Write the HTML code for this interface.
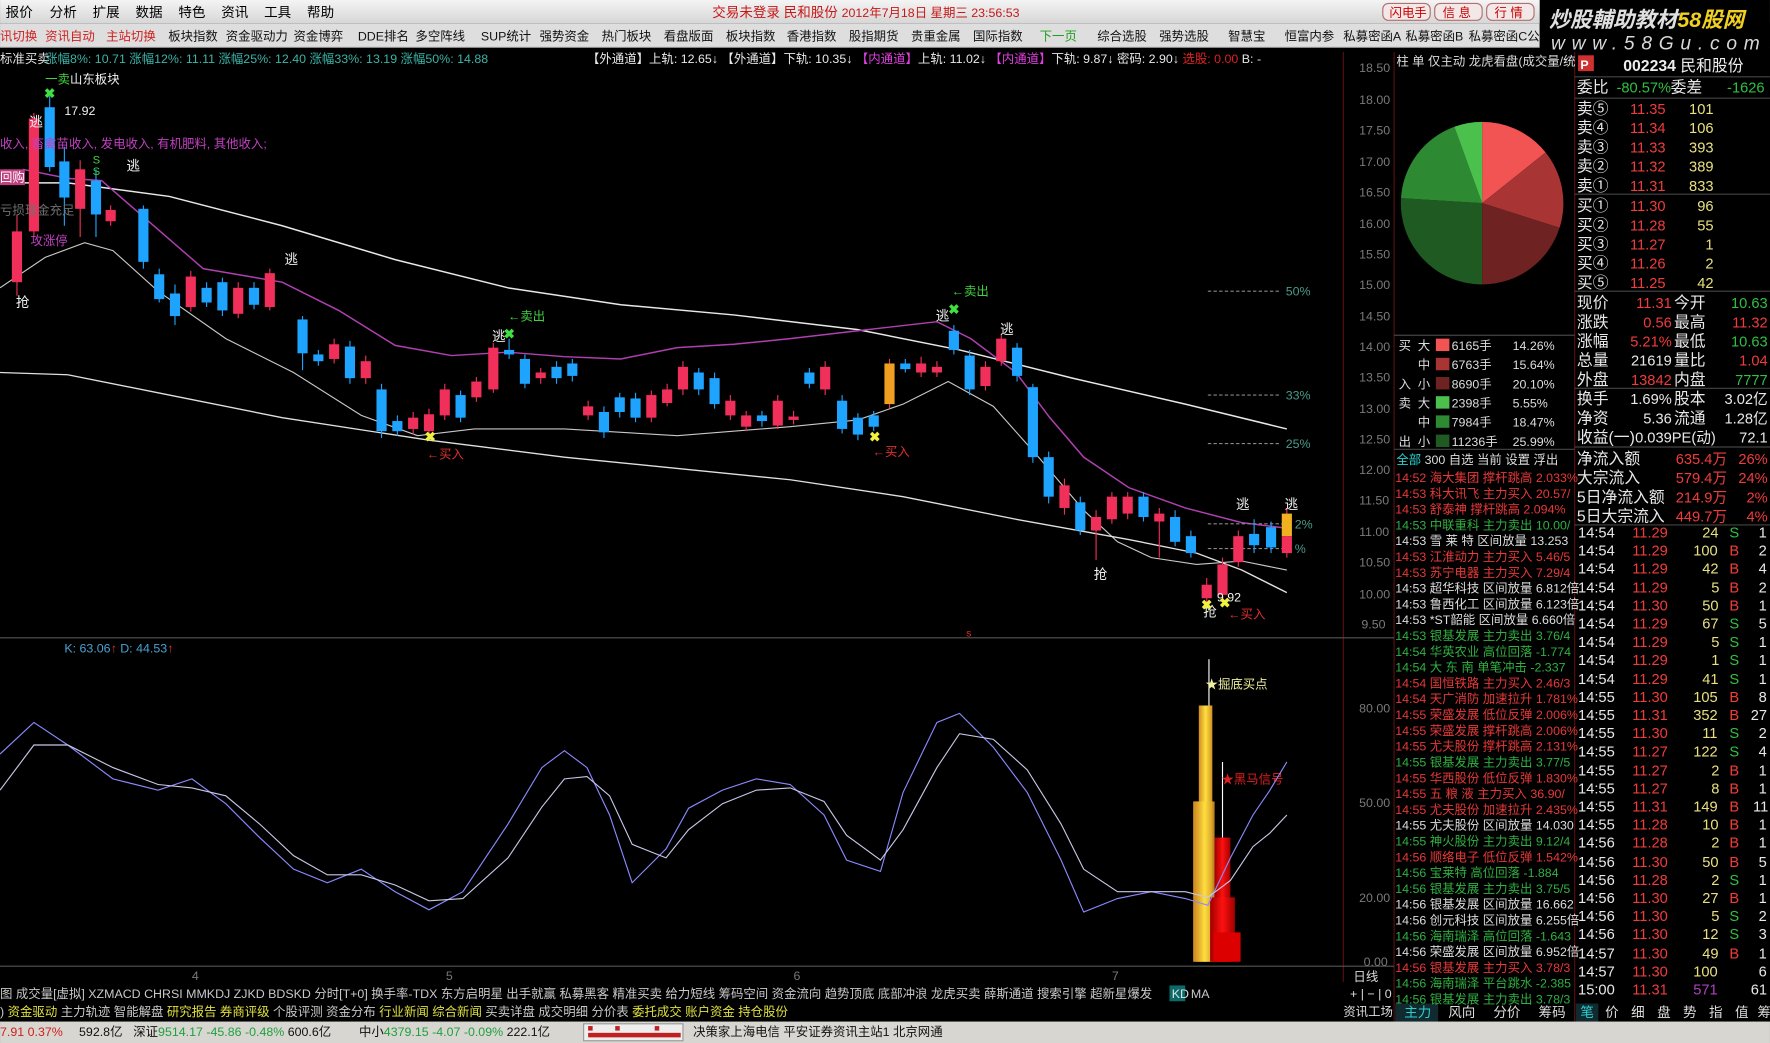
<!DOCTYPE html>
<html><head><meta charset="utf-8">
<style>
html,body{margin:0;padding:0;background:#000;width:1770px;height:1043px;overflow:hidden}
svg{display:block}
text{font-family:"Liberation Sans","Noto Sans CJK SC",sans-serif}
.r{fill:#f0305a}.b{fill:#1ea4ff}
.wr line{stroke:#f0305a}.wb line{stroke:#1ea4ff}
</style></head><body>
<svg width="1770" height="1043" viewBox="0 0 1568 924" xmlns="http://www.w3.org/2000/svg">
<defs>
<linearGradient id="mg" x1="0" y1="0" x2="0" y2="1"><stop offset="0" stop-color="#f4f4f4"/><stop offset="1" stop-color="#d6d6d6"/></linearGradient>
<linearGradient id="yb" x1="0" y1="0" x2="1" y2="0"><stop offset="0" stop-color="#d08a20"/><stop offset=".5" stop-color="#ffe040"/><stop offset="1" stop-color="#d09020"/></linearGradient>
<linearGradient id="rb" x1="0" y1="0" x2="1" y2="0"><stop offset="0" stop-color="#a00000"/><stop offset=".5" stop-color="#ff1010"/><stop offset="1" stop-color="#a00000"/></linearGradient>
</defs>
<rect width="1568" height="924" fill="#000"/>
<rect x="0" y="0" width="1568" height="21" fill="url(#mg)"/>
<g font-size="12" fill="#000">
<text x="5" y="15">报价</text><text x="44" y="15">分析</text><text x="82" y="15">扩展</text><text x="120" y="15">数据</text><text x="158" y="15">特色</text><text x="196" y="15">资讯</text><text x="234" y="15">工具</text><text x="272" y="15">帮助</text>
</g>
<text x="631" y="15" font-size="12" fill="#c81818">交易未登录 民和股份 <tspan font-size="11">2012年7月18日 星期三 23:56:53</tspan></text>
<g font-size="11" fill="#c00">
<rect x="1225" y="3" width="42" height="15" rx="5" fill="#f2e8e8" stroke="#b07070"/><text x="1231" y="15">闪电手</text>
<rect x="1271" y="3" width="42" height="15" rx="5" fill="#f2e8e8" stroke="#b07070"/><text x="1278" y="15">信  息</text>
<rect x="1317" y="3" width="42" height="15" rx="5" fill="#f2e8e8" stroke="#b07070"/><text x="1324" y="15">行  情</text>
</g>
<rect x="0" y="21" width="1364" height="21" fill="#dedede"/>
<line x1="0" y1="42" x2="1568" y2="42" stroke="#888"/>
<g font-size="11" fill="#111">
<text x="0" y="36" fill="#d02020">讯切换</text><text x="40" y="36" fill="#d02020">资讯自动</text><text x="94" y="36" fill="#d02020">主站切换</text>
<text x="149" y="36">板块指数</text><text x="200" y="36">资金驱动力</text><text x="260" y="36">资金博弈</text><text x="317" y="36">DDE排名</text><text x="368" y="36">多空阵线</text><text x="426" y="36">SUP统计</text><text x="478" y="36">强势资金</text><text x="533" y="36">热门板块</text><text x="588" y="36">看盘版面</text><text x="643" y="36">板块指数</text><text x="697" y="36">香港指数</text><text x="752" y="36">股指期货</text><text x="807" y="36">贵重金属</text><text x="862" y="36">国际指数</text><text x="921" y="36" fill="#20a020">下一页</text><text x="972" y="36">综合选股</text><text x="1027" y="36">强势选股</text><text x="1088" y="36">智慧宝</text><text x="1138" y="36">恒富内参</text><text x="1190" y="36">私募密函A</text><text x="1245" y="36">私募密函B</text><text x="1301" y="36">私募密函C</text><text x="1353" y="36">公</text>
</g>
<rect x="1364" y="0" width="204" height="46" fill="#000"/>
<text x="1372" y="24" font-size="19" font-style="italic" fill="#e0e0e0" font-weight="bold">炒股輔助教材<tspan fill="#f0d020">58股网</tspan></text>
<text x="1374" y="44" font-size="17" font-style="italic" fill="#d8d8d8" letter-spacing="6">www.58Gu.com</text>
<g font-size="11">
<text x="0" y="56" fill="#e0e0e0">标准买卖</text>
<text x="40" y="56" fill="#3cb4a8">涨幅8%: 10.71  涨幅12%: 11.11  涨幅25%: 12.40  涨幅33%: 13.19  涨幅50%: 14.88</text>
<text x="520" y="56" fill="#e8e8e8">【外通道】上轨: 12.65↓ 【外通道】下轨: 10.35↓ <tspan fill="#e040e0">【内通道】</tspan>上轨: 11.02↓ <tspan fill="#e040e0">【内通道】</tspan>下轨: 9.87↓  密码: 2.90↓ <tspan fill="#e02020">选股: 0.00</tspan>  B: -</text>
</g>
<g stroke="#5a1010" stroke-width="1">
<line x1="1190" y1="46" x2="1190" y2="870"/><line x1="1235" y1="46" x2="1235" y2="905"/>
<line x1="1395" y1="46" x2="1395" y2="905"/>
<line x1="0" y1="565" x2="1235" y2="565" stroke="#555"/>
<line x1="0" y1="856" x2="1235" y2="856" stroke="#555"/>
<line x1="1235" y1="297" x2="1395" y2="297" stroke="#444"/><line x1="1235" y1="398" x2="1395" y2="398" stroke="#444"/>
<line x1="1395" y1="68" x2="1568" y2="68" stroke="#444"/><line x1="1395" y1="87" x2="1568" y2="87" stroke="#444"/>
<line x1="1395" y1="172" x2="1568" y2="172" stroke="#444"/><line x1="1395" y1="258" x2="1568" y2="258" stroke="#444"/>
<line x1="1395" y1="344" x2="1568" y2="344" stroke="#444"/><line x1="1395" y1="396" x2="1568" y2="396" stroke="#444"/>
<line x1="1395" y1="465" x2="1568" y2="465" stroke="#444"/>
</g>
<g font-size="11" fill="#7a7a7a">
<text x="1204" y="64">18.50</text><text x="1204" y="92">18.00</text><text x="1204" y="119">17.50</text><text x="1204" y="147">17.00</text><text x="1204" y="174">16.50</text><text x="1204" y="202">16.00</text><text x="1204" y="229">15.50</text><text x="1204" y="256">15.00</text><text x="1204" y="284">14.50</text><text x="1204" y="311">14.00</text><text x="1204" y="338">13.50</text><text x="1204" y="366">13.00</text><text x="1204" y="393">12.50</text><text x="1204" y="420">12.00</text><text x="1204" y="447">11.50</text><text x="1204" y="475">11.00</text><text x="1204" y="502">10.50</text><text x="1204" y="530">10.00</text><text x="1206" y="557">9.50</text>
<text x="1204" y="631">80.00</text><text x="1204" y="715">50.00</text><text x="1204" y="799">20.00</text><text x="1208" y="856">0.00</text>
</g>
<polyline fill="none" stroke="#e8e8e8" stroke-width="1.3" points="0,162 60,162 150,174 250,200 350,230 450,255 550,270 650,279 760,292 850,310 950,335 1050,358 1140,380"/>
<polyline fill="none" stroke="#b040b0" stroke-width="1.3" points="20,150 60,158 90,160 120,186 180,238 250,250 300,275 350,306 400,315 450,312 500,316 550,318 600,308 650,305 700,300 760,293 830,285 860,300 900,330 930,370 960,405 1000,432 1050,450 1100,463 1140,468"/>
<polyline fill="none" stroke="#c8c8c8" stroke-width="1" points="0,255 40,228 75,215 100,222 140,258 200,300 260,330 320,368 370,386 420,380 500,380 600,386 700,378 760,372 800,358 840,338 880,360 920,405 960,452 990,480 1020,494 1060,500 1100,497 1140,505"/>
<polyline fill="none" stroke="#e0e0e0" stroke-width="1.2" points="0,330 60,332 150,350 250,370 380,390 500,405 600,415 700,425 800,440 900,460 1000,478 1060,490 1100,505 1140,525"/>
<g stroke="#888" stroke-dasharray="3,2"><line x1="1070" y1="258" x2="1135" y2="258"/><line x1="1070" y1="350" x2="1135" y2="350"/><line x1="1070" y1="393" x2="1135" y2="393"/><line x1="1070" y1="464" x2="1145" y2="464"/><line x1="1070" y1="486" x2="1145" y2="486"/></g>
<g font-size="11" fill="#4a9a8a"><text x="1139" y="262">50%</text><text x="1139" y="354">33%</text><text x="1139" y="397">25%</text><text x="1147" y="468">2%</text><text x="1147" y="490">%</text></g>
<g stroke-width="1">
<g class="wr"><line x1="15" y1="190" x2="15" y2="262"/><line x1="30" y1="100" x2="30" y2="210"/><line x1="71" y1="142" x2="71" y2="210"/><line x1="98" y1="182" x2="98" y2="200"/><line x1="169" y1="240" x2="169" y2="276"/><line x1="211" y1="250" x2="211" y2="282"/><line x1="239" y1="238" x2="239" y2="275"/><line x1="296" y1="300" x2="296" y2="322"/><line x1="324" y1="315" x2="324" y2="340"/><line x1="366" y1="365" x2="366" y2="385"/><line x1="380" y1="362" x2="380" y2="386"/><line x1="394" y1="340" x2="394" y2="372"/><line x1="422" y1="334" x2="422" y2="356"/><line x1="437" y1="304" x2="437" y2="348"/><line x1="479" y1="326" x2="479" y2="340"/><line x1="521" y1="355" x2="521" y2="372"/><line x1="577" y1="346" x2="577" y2="374"/><line x1="591" y1="340" x2="591" y2="360"/><line x1="605" y1="320" x2="605" y2="350"/><line x1="647" y1="350" x2="647" y2="372"/><line x1="661" y1="364" x2="661" y2="382"/><line x1="689" y1="350" x2="689" y2="380"/><line x1="703" y1="364" x2="703" y2="376"/><line x1="731" y1="320" x2="731" y2="350"/><line x1="788" y1="318" x2="788" y2="362"/><line x1="816" y1="316" x2="816" y2="334"/><line x1="830" y1="320" x2="830" y2="334"/><line x1="873" y1="320" x2="873" y2="346"/><line x1="887" y1="296" x2="887" y2="324"/><line x1="943" y1="424" x2="943" y2="456"/><line x1="971" y1="452" x2="971" y2="496"/><line x1="985" y1="436" x2="985" y2="464"/><line x1="999" y1="436" x2="999" y2="460"/><line x1="1027" y1="450" x2="1027" y2="494"/><line x1="1069" y1="512" x2="1069" y2="534"/><line x1="1083" y1="494" x2="1083" y2="532"/><line x1="1097" y1="470" x2="1097" y2="502"/><line x1="1140" y1="450" x2="1140" y2="494"/></g>
<g class="wb"><line x1="44" y1="85" x2="44" y2="152"/><line x1="57" y1="130" x2="57" y2="200"/><line x1="85" y1="150" x2="85" y2="210"/><line x1="127" y1="182" x2="127" y2="238"/><line x1="141" y1="238" x2="141" y2="268"/><line x1="155" y1="252" x2="155" y2="288"/><line x1="183" y1="250" x2="183" y2="272"/><line x1="197" y1="246" x2="197" y2="280"/><line x1="225" y1="250" x2="225" y2="274"/><line x1="268" y1="280" x2="268" y2="328"/><line x1="282" y1="310" x2="282" y2="324"/><line x1="310" y1="302" x2="310" y2="340"/><line x1="338" y1="340" x2="338" y2="388"/><line x1="352" y1="368" x2="352" y2="386"/><line x1="408" y1="346" x2="408" y2="374"/><line x1="451" y1="300" x2="451" y2="318"/><line x1="465" y1="314" x2="465" y2="344"/><line x1="493" y1="320" x2="493" y2="340"/><line x1="507" y1="318" x2="507" y2="338"/><line x1="535" y1="360" x2="535" y2="388"/><line x1="549" y1="348" x2="549" y2="370"/><line x1="563" y1="348" x2="563" y2="374"/><line x1="619" y1="326" x2="619" y2="350"/><line x1="633" y1="330" x2="633" y2="362"/><line x1="675" y1="364" x2="675" y2="378"/><line x1="717" y1="326" x2="717" y2="344"/><line x1="746" y1="350" x2="746" y2="384"/><line x1="760" y1="366" x2="760" y2="390"/><line x1="774" y1="364" x2="774" y2="382"/><line x1="802" y1="318" x2="802" y2="330"/><line x1="845" y1="288" x2="845" y2="314"/><line x1="859" y1="310" x2="859" y2="350"/><line x1="901" y1="304" x2="901" y2="338"/><line x1="915" y1="340" x2="915" y2="410"/><line x1="929" y1="400" x2="929" y2="446"/><line x1="957" y1="440" x2="957" y2="474"/><line x1="1013" y1="436" x2="1013" y2="462"/><line x1="1041" y1="452" x2="1041" y2="484"/><line x1="1055" y1="470" x2="1055" y2="494"/><line x1="1111" y1="460" x2="1111" y2="490"/><line x1="1126" y1="462" x2="1126" y2="490"/></g>
</g>
<g>
<rect class="r" x="10.5" y="205" width="9" height="45"/><rect class="r" x="25.5" y="105" width="9" height="100"/><rect class="b" x="39.5" y="95" width="9" height="53"/><rect class="b" x="52.5" y="143" width="9" height="32"/><rect class="r" x="66.5" y="150" width="9" height="35"/><rect class="b" x="80.5" y="160" width="9" height="30"/><rect class="r" x="93.5" y="186" width="9" height="10"/>
<rect class="b" x="122.5" y="185" width="9" height="47"/><rect class="b" x="136.5" y="243" width="9" height="22"/><rect class="b" x="150.5" y="260" width="9" height="20"/><rect class="r" x="164.5" y="245" width="9" height="27"/><rect class="b" x="178.5" y="255" width="9" height="13"/><rect class="b" x="192.5" y="250" width="9" height="25"/><rect class="r" x="206.5" y="255" width="9" height="23"/><rect class="b" x="220.5" y="255" width="9" height="15"/><rect class="r" x="234.5" y="242" width="9" height="30"/>
<rect class="b" x="263.5" y="283" width="9" height="30"/><rect class="b" x="277.5" y="314" width="9" height="6"/><rect class="r" x="291.5" y="305" width="9" height="13"/><rect class="b" x="305.5" y="307" width="9" height="28"/><rect class="r" x="319.5" y="320" width="9" height="15"/><rect class="b" x="333.5" y="345" width="9" height="37"/><rect class="b" x="347.5" y="373" width="9" height="9"/><rect class="r" x="361.5" y="370" width="9" height="10"/><rect class="r" x="375.5" y="367" width="9" height="15"/><rect class="r" x="389.5" y="345" width="9" height="23"/><rect class="b" x="403.5" y="350" width="9" height="20"/><rect class="r" x="417.5" y="338" width="9" height="14"/><rect class="r" x="432.5" y="308" width="9" height="37"/><rect class="b" x="446.5" y="310" width="9" height="4"/><rect class="b" x="460.5" y="318" width="9" height="22"/><rect class="r" x="474.5" y="330" width="9" height="5"/><rect class="b" x="488.5" y="325" width="9" height="10"/><rect class="b" x="502.5" y="322" width="9" height="11"/><rect class="r" x="516.5" y="360" width="9" height="8"/><rect class="b" x="530.5" y="365" width="9" height="18"/><rect class="b" x="544.5" y="352" width="9" height="13"/><rect class="b" x="558.5" y="353" width="9" height="17"/><rect class="r" x="572.5" y="350" width="9" height="20"/><rect class="r" x="586.5" y="345" width="9" height="12"/><rect class="r" x="600.5" y="325" width="9" height="20"/><rect class="b" x="614.5" y="330" width="9" height="15"/><rect class="b" x="628.5" y="335" width="9" height="23"/><rect class="r" x="642.5" y="355" width="9" height="13"/><rect class="r" x="656.5" y="368" width="9" height="10"/><rect class="b" x="670.5" y="368" width="9" height="5"/><rect class="r" x="684.5" y="355" width="9" height="22"/><rect class="r" x="698.5" y="369" width="9" height="3"/><rect class="b" x="712.5" y="330" width="9" height="10"/><rect class="r" x="726.5" y="325" width="9" height="20"/><rect class="b" x="741.5" y="355" width="9" height="25"/><rect class="b" x="755.5" y="370" width="9" height="15"/><rect class="b" x="769.5" y="368" width="9" height="10"/><rect x="783.5" y="322" width="9" height="36" fill="#f0a020"/><rect class="b" x="797.5" y="322" width="9" height="5"/><rect class="r" x="811.5" y="322" width="9" height="8"/><rect class="r" x="825.5" y="325" width="9" height="5"/><rect class="b" x="840.5" y="293" width="9" height="17"/><rect class="b" x="854.5" y="315" width="9" height="30"/><rect class="r" x="868.5" y="325" width="9" height="17"/><rect class="r" x="882.5" y="300" width="9" height="20"/><rect class="b" x="896.5" y="308" width="9" height="25"/><rect class="b" x="910.5" y="343" width="9" height="62"/><rect class="b" x="924.5" y="405" width="9" height="35"/><rect class="r" x="938.5" y="430" width="9" height="20"/><rect class="b" x="952.5" y="445" width="9" height="25"/><rect class="r" x="966.5" y="458" width="9" height="12"/><rect class="r" x="980.5" y="440" width="9" height="20"/><rect class="r" x="994.5" y="440" width="9" height="15"/><rect class="b" x="1008.5" y="440" width="9" height="18"/><rect class="r" x="1022.5" y="455" width="9" height="7"/><rect class="b" x="1036.5" y="458" width="9" height="22"/><rect class="b" x="1050.5" y="475" width="9" height="15"/><rect class="r" x="1064.5" y="518" width="9" height="12"/><rect class="r" x="1078.5" y="500" width="9" height="27"/><rect class="r" x="1092.5" y="475" width="9" height="23"/><rect class="b" x="1106.5" y="473" width="9" height="10"/><rect class="b" x="1121.5" y="467" width="9" height="18"/><rect x="1135.5" y="455" width="9" height="20" fill="#f0b020"/><rect class="r" x="1135.5" y="475" width="9" height="15"/>
</g>
<g font-size="12" fill="#f0f0f0">
<text x="26" y="112">逃</text><text x="112" y="151">逃</text><text x="252" y="234">逃</text><text x="436" y="302">逃</text><text x="829" y="284">逃</text><text x="886" y="296">逃</text><text x="1095" y="451">逃</text><text x="1138" y="451">逃</text>
<text x="14" y="272">抢</text><text x="969" y="513">抢</text><text x="1066" y="546">抢</text>
<text x="57" y="102" font-size="11">17.92</text><text x="1078" y="533" font-size="11">9.92</text>
</g>
<text x="40" y="74" font-size="11" fill="#40d040">一卖<tspan fill="#f0f0f0">山东板块</tspan></text>
<text x="0" y="131" font-size="11" fill="#c040c0">收入, 畜禽苗收入, 发电收入, 有机肥料, 其他收入;</text>
<rect x="0" y="150" width="22" height="14" fill="#c04080"/><text x="0" y="161" font-size="11" fill="#fff">回购</text>
<text x="0" y="190" font-size="11" fill="#707070">亏损现金充足</text>
<text x="27" y="217" font-size="11" fill="#c040c0">攻涨停</text>
<g font-size="11"><text x="450" y="284" fill="#40d040">←卖出</text><text x="843" y="262" fill="#40d040">←卖出</text><text x="378" y="406" fill="#e03030">←买入</text><text x="773" y="404" fill="#e03030">←买入</text><text x="1088" y="548" fill="#e03030">←买入</text></g>
<g font-size="12" font-weight="bold"><text x="39" y="87" fill="#40e040">✖</text><text x="446" y="300" fill="#40e040">✖</text><text x="840" y="278" fill="#40e040">✖</text><text x="376" y="391" fill="#f0f040">✖</text><text x="770" y="391" fill="#f0f040">✖</text><text x="1064" y="540" fill="#f0f040">✖</text><text x="1080" y="538" fill="#f0f040">✖</text></g>
<text x="82" y="145" font-size="10" fill="#40d040">S</text><text x="82" y="155" font-size="10" fill="#40d040">S</text>
<text x="856" y="564" font-size="9" fill="#e03030">s</text>
<text x="57" y="578" font-size="11" fill="#4aa0d0">K: 63.06<tspan fill="#e03030">↑</tspan>   D: 44.53<tspan fill="#e03030">↑</tspan></text>
<rect x="1057" y="710" width="8" height="142" fill="#d0902a"/><rect x="1062" y="625" width="12" height="227" fill="url(#yb)"/><rect x="1058" y="710" width="18" height="142" fill="url(#yb)" opacity=".9"/>
<rect x="1076" y="742" width="14" height="110" fill="url(#rb)"/><rect x="1072" y="795" width="22" height="57" fill="url(#rb)"/><rect x="1075" y="826" width="24" height="26" fill="#d00"/>
<line x1="1071" y1="584" x2="1071" y2="625" stroke="#fff"/><line x1="1083" y1="675" x2="1083" y2="742" stroke="#fff"/>
<text x="1068" y="610" font-size="11" fill="#f0f0a0">★掘底买点</text><text x="1082" y="694" font-size="11" fill="#e02020">★黑马信号</text>
<polyline fill="none" stroke="#8a8aff" stroke-width="1" points="0,668 30,640 60,660 100,690 140,700 170,690 200,712 230,742 260,770 290,782 320,770 350,790 380,806 410,790 450,730 480,680 500,665 520,680 540,722 560,782 590,752 610,716 640,700 670,690 700,695 730,722 750,762 780,772 800,702 830,640 850,632 880,662 910,702 940,762 960,808 990,796 1020,790 1050,796 1070,802 1090,760 1110,722 1125,700 1140,675"/>
<polyline fill="none" stroke="#c8c8e8" stroke-width="1" points="0,700 30,660 60,660 100,680 140,695 170,698 200,705 230,730 260,758 290,775 320,775 350,784 380,798 410,796 450,760 480,715 500,690 520,688 540,705 560,748 590,760 610,735 640,712 670,700 700,698 730,710 750,740 780,762 800,735 830,680 850,650 880,655 910,682 940,730 960,770 990,790 1020,790 1050,790 1070,795 1090,780 1110,750 1125,738 1140,722"/>
<g font-size="11" fill="#777"><text x="170" y="868">4</text><text x="395" y="868">5</text><text x="703" y="868">6</text><text x="985" y="868">7</text></g>
<g font-size="11" fill="#c8c8c8">
<text x="0" y="884">图 成交量[虚拟] XZMACD CHRSI MMKDJ ZJKD BDSKD 分时[T+0] 换手率-TDX 东方启明星 出手就赢 私募黑客 精准买卖 给力短线 筹码空间 资金流向 趋势顶底 底部冲浪 龙虎买卖 薛斯通道 搜索引擎 超新星爆发</text>
<rect x="1036" y="873" width="14" height="14" fill="#0a6a6a"/><text x="1038" y="884" fill="#e0e0e0">KD</text><text x="1055" y="884">MA</text>
<text x="0" y="900">) <tspan fill="#e0e040">资金驱动</tspan> 主力轨迹 智能解盘 <tspan fill="#e0e040">研究报告 券商评级</tspan> 个股评测 资金分布 <tspan fill="#e0e040">行业新闻 综合新闻</tspan> 买卖详盘 成交明细 分价表 <tspan fill="#e0e040">委托成交 账户资金 持仓股份</tspan></text>
<text x="1199" y="869" fill="#ddd">日线</text><text x="1196" y="884" fill="#ddd">+ | − | 0</text><text x="1190" y="900" fill="#ddd">资讯工场</text>
</g>
<g font-size="12" fill="#ddd"><rect x="1236" y="889" width="38" height="16" fill="#102a30"/><text x="1244" y="901" fill="#2ad0d0">主力</text><text x="1283" y="901">风向</text><text x="1323" y="901">分价</text><text x="1363" y="901">筹码</text>
<rect x="1396" y="889" width="20" height="16" fill="#102a30"/><text x="1400" y="901" fill="#2ad0d0">笔</text><text x="1422" y="901">价</text><text x="1445" y="901">细</text><text x="1468" y="901">盘</text><text x="1491" y="901">势</text><text x="1514" y="901">指</text><text x="1537" y="901">值</text><text x="1557" y="901">筹</text></g>
<rect x="0" y="905" width="1568" height="19" fill="#d8d6d0"/>
<g font-size="11"><text x="0" y="918" fill="#d02020">7.91  0.37%</text><text x="70" y="918" fill="#111">592.8亿</text><text x="118" y="918" fill="#111">深证<tspan fill="#20a040">9514.17  -45.86  -0.48%</tspan> 600.6亿</text><text x="318" y="918" fill="#111">中小<tspan fill="#20a040">4379.15  -4.07  -0.09%</tspan>  222.1亿</text>
<rect x="517" y="907" width="88" height="15" fill="#eee" stroke="#999"/>
<g fill="#c02020"><rect x="521" y="915" width="82" height="4"/><rect x="521" y="909" width="4" height="4"/><rect x="545" y="909" width="4" height="4"/><rect x="580" y="909" width="4" height="4"/></g>
<text x="614" y="918" fill="#111">决策家上海电信  平安证券资讯主站1  北京网通</text></g>
<text x="1237" y="58" font-size="11" fill="#ddd">柱  单  仅主动  龙虎看盘(成交量/统</text>
<path d="M1313,180 L1313,108 A72,72 0 0 1 1369.2,135 Z" fill="#f25454"/>
<path d="M1313,180 L1369.2,135 A72,72 0 0 1 1381.6,201.8 Z" fill="#a83434"/>
<path d="M1313,180 L1381.6,201.8 A72,72 0 0 1 1313,252 Z" fill="#6e2222"/>
<path d="M1313,180 L1313,252 A72,72 0 0 1 1241.1,175.5 Z" fill="#1f5a22"/>
<path d="M1313,180 L1241.1,175.5 A72,72 0 0 1 1288.4,112.3 Z" fill="#2e8a32"/>
<path d="M1313,180 L1288.4,112.3 A72,72 0 0 1 1313,108 Z" fill="#4cc04c"/>
<g font-size="11" fill="#ddd">
<text x="1239" y="310">买</text><text x="1256" y="310">大</text><rect x="1272" y="300" width="12" height="11" fill="#f25454"/><text x="1286" y="310">6165手</text><text x="1340" y="310">14.26%</text>
<text x="1256" y="327">中</text><rect x="1272" y="317" width="12" height="11" fill="#a83434"/><text x="1286" y="327">6763手</text><text x="1340" y="327">15.64%</text>
<text x="1239" y="344">入</text><text x="1256" y="344">小</text><rect x="1272" y="334" width="12" height="11" fill="#6e2222"/><text x="1286" y="344">8690手</text><text x="1340" y="344">20.10%</text>
<text x="1239" y="361">卖</text><text x="1256" y="361">大</text><rect x="1272" y="351" width="12" height="11" fill="#4cc04c"/><text x="1286" y="361">2398手</text><text x="1340" y="361">5.55%</text>
<text x="1256" y="378">中</text><rect x="1272" y="368" width="12" height="11" fill="#2e8a32"/><text x="1286" y="378">7984手</text><text x="1340" y="378">18.47%</text>
<text x="1239" y="395">出</text><text x="1256" y="395">小</text><rect x="1272" y="385" width="12" height="11" fill="#1f5a22"/><text x="1286" y="395">11236手</text><text x="1340" y="395">25.99%</text>
<text x="1237" y="411"><tspan fill="#2ad0d0">全部</tspan> 300 自选 当前 设置 浮出</text>
</g>
<g font-size="11">
<g fill="#e83838"><text x="1236" y="427">14:52 海大集团  撑杆跳高 2.033%</text><text x="1236" y="441">14:53 科大讯飞  主力买入 20.57/</text><text x="1236" y="455">14:53 舒泰神    撑杆跳高 2.094%</text></g>
<text x="1236" y="469" fill="#30b040">14:53 中联重科  主力卖出 10.00/</text>
<text x="1236" y="483" fill="#ddd">14:53 雪 莱 特  区间放量 13.253</text>
<g fill="#e83838"><text x="1236" y="497">14:53 江淮动力  主力买入 5.46/5</text><text x="1236" y="511">14:53 苏宁电器  主力买入 7.29/4</text></g>
<g fill="#ddd"><text x="1236" y="525">14:53 超华科技  区间放量 6.812倍</text><text x="1236" y="539">14:53 鲁西化工  区间放量 6.123倍</text><text x="1236" y="553">14:53 *ST韶能   区间放量 6.660倍</text></g>
<g fill="#30b040"><text x="1236" y="567">14:53 银基发展  主力卖出 3.76/4</text><text x="1236" y="581">14:54 华英农业  高位回落 -1.774</text><text x="1236" y="595">14:54 大 东 南  单笔冲击 -2.337</text></g>
<g fill="#e83838"><text x="1236" y="609">14:54 国恒铁路  主力买入 2.46/3</text><text x="1236" y="623">14:54 天广消防  加速拉升 1.781%</text><text x="1236" y="637">14:55 荣盛发展  低位反弹 2.006%</text><text x="1236" y="651">14:55 荣盛发展  撑杆跳高 2.006%</text><text x="1236" y="665">14:55 尤夫股份  撑杆跳高 2.131%</text></g>
<text x="1236" y="679" fill="#30b040">14:55 银基发展  主力卖出 3.77/5</text>
<g fill="#e83838"><text x="1236" y="693">14:55 华西股份  低位反弹 1.830%</text><text x="1236" y="707">14:55 五 粮 液  主力买入 36.90/</text><text x="1236" y="721">14:55 尤夫股份  加速拉升 2.435%</text></g>
<text x="1236" y="735" fill="#ddd">14:55 尤夫股份  区间放量 14.030</text>
<text x="1236" y="749" fill="#30b040">14:55 神火股份  主力卖出 9.12/4</text>
<text x="1236" y="763" fill="#e83838">14:56 顺络电子  低位反弹 1.542%</text>
<g fill="#30b040"><text x="1236" y="777">14:56 宝莱特    高位回落 -1.884</text><text x="1236" y="791">14:56 银基发展  主力卖出 3.75/5</text></g>
<g fill="#ddd"><text x="1236" y="805">14:56 银基发展  区间放量 16.662</text><text x="1236" y="819">14:56 创元科技  区间放量 6.255倍</text></g>
<text x="1236" y="833" fill="#30b040">14:56 海南瑞泽  高位回落 -1.643</text>
<text x="1236" y="847" fill="#ddd">14:56 荣盛发展  区间放量 6.952倍</text>
<text x="1236" y="861" fill="#e83838">14:56 银基发展  主力买入 3.78/3</text>
<g fill="#30b040"><text x="1236" y="875">14:56 海南瑞泽  平台跳水 -2.385</text><text x="1236" y="889">14:56 银基发展  主力卖出 3.78/3</text></g>
</g>
<rect x="1398" y="49" width="14" height="14" fill="#d03030"/><text x="1400" y="61" font-size="11" fill="#fff" font-weight="bold">P</text>
<text x="1438" y="63" font-size="14" fill="#eee" font-weight="bold">002234 <tspan font-weight="normal">民和股份</tspan></text>
<g font-size="14" fill="#e8e8e8">
<text x="1397" y="82">委比</text><text x="1432" y="82" fill="#30c040" font-size="13">-80.57%</text><text x="1480" y="82">委差</text><text x="1530" y="82" fill="#30c040" font-size="13">-1626</text>
<text x="1397" y="101">卖⑤</text><text x="1397" y="118">卖④</text><text x="1397" y="135">卖③</text><text x="1397" y="152">卖②</text><text x="1397" y="169">卖①</text>
<text x="1397" y="187">买①</text><text x="1397" y="204">买②</text><text x="1397" y="221">买③</text><text x="1397" y="238">买④</text><text x="1397" y="255">买⑤</text>
<g font-size="13" fill="#f03c3c"><text x="1444" y="101">11.35</text><text x="1444" y="118">11.34</text><text x="1444" y="135">11.33</text><text x="1444" y="152">11.32</text><text x="1444" y="169">11.31</text><text x="1444" y="187">11.30</text><text x="1444" y="204">11.28</text><text x="1444" y="221">11.27</text><text x="1444" y="238">11.26</text><text x="1444" y="255">11.25</text></g>
<g font-size="13" fill="#e8e080" text-anchor="end"><text x="1518" y="101">101</text><text x="1518" y="118">106</text><text x="1518" y="135">393</text><text x="1518" y="152">389</text><text x="1518" y="169">833</text><text x="1518" y="187">96</text><text x="1518" y="204">55</text><text x="1518" y="221">1</text><text x="1518" y="238">2</text><text x="1518" y="255">42</text></g>
<text x="1397" y="273">现价</text><text x="1397" y="290">涨跌</text><text x="1397" y="307">涨幅</text><text x="1397" y="324">总量</text><text x="1397" y="341">外盘</text>
<text x="1483" y="273">今开</text><text x="1483" y="290">最高</text><text x="1483" y="307">最低</text><text x="1483" y="324">量比</text><text x="1483" y="341">内盘</text>
<g font-size="13" text-anchor="end"><text x="1481" y="273" fill="#f03c3c">11.31</text><text x="1481" y="290" fill="#f03c3c">0.56</text><text x="1481" y="307" fill="#f03c3c">5.21%</text><text x="1481" y="324" fill="#e8e8e8">21619</text><text x="1481" y="341" fill="#f03c3c">13842</text>
<text x="1566" y="273" fill="#30c040">10.63</text><text x="1566" y="290" fill="#f03c3c">11.32</text><text x="1566" y="307" fill="#30c040">10.63</text><text x="1566" y="324" fill="#f03c3c">1.04</text><text x="1566" y="341" fill="#30c040">7777</text>
<text x="1481" y="358" fill="#e8e8e8">1.69%</text><text x="1481" y="375" fill="#e8e8e8">5.36</text><text x="1481" y="392" fill="#e8e8e8">0.039</text><text x="1566" y="358" fill="#e8e8e8">3.02亿</text><text x="1566" y="375" fill="#e8e8e8">1.28亿</text><text x="1566" y="392" fill="#e8e8e8">72.1</text></g>
<text x="1397" y="358">换手</text><text x="1397" y="375">净资</text><text x="1397" y="392">收益(一)</text><text x="1483" y="358">股本</text><text x="1483" y="375">流通</text><text x="1481" y="392" font-size="13">PE(动)</text>
<text x="1397" y="411">净流入额</text><text x="1397" y="428">大宗流入</text><text x="1397" y="445">5日净流入额</text><text x="1397" y="462">5日大宗流入</text>
<g font-size="13" fill="#f03c3c" text-anchor="end"><text x="1530" y="411">635.4万</text><text x="1530" y="428">579.4万</text><text x="1530" y="445">214.9万</text><text x="1530" y="462">449.7万</text><text x="1566" y="411">26%</text><text x="1566" y="428">24%</text><text x="1566" y="445">2%</text><text x="1566" y="462">4%</text></g>
</g>
<g font-size="13" fill="#e8e8e8">
<text y="476"><tspan x="1398">14:54</tspan><tspan x="1446" fill="#f03c3c">11.29</tspan><tspan x="1508" fill="#e8e080">24</tspan><tspan x="1532" fill="#30c040">S</tspan><tspan x="1558">1</tspan></text>
<text y="492"><tspan x="1398">14:54</tspan><tspan x="1446" fill="#f03c3c">11.29</tspan><tspan x="1500" fill="#e8e080">100</tspan><tspan x="1532" fill="#f03c3c">B</tspan><tspan x="1558">2</tspan></text>
<text y="508"><tspan x="1398">14:54</tspan><tspan x="1446" fill="#f03c3c">11.29</tspan><tspan x="1508" fill="#e8e080">42</tspan><tspan x="1532" fill="#f03c3c">B</tspan><tspan x="1558">4</tspan></text>
<text y="525"><tspan x="1398">14:54</tspan><tspan x="1446" fill="#f03c3c">11.29</tspan><tspan x="1516" fill="#e8e080">5</tspan><tspan x="1532" fill="#f03c3c">B</tspan><tspan x="1558">2</tspan></text>
<text y="541"><tspan x="1398">14:54</tspan><tspan x="1446" fill="#f03c3c">11.30</tspan><tspan x="1508" fill="#e8e080">50</tspan><tspan x="1532" fill="#f03c3c">B</tspan><tspan x="1558">1</tspan></text>
<text y="557"><tspan x="1398">14:54</tspan><tspan x="1446" fill="#f03c3c">11.29</tspan><tspan x="1508" fill="#e8e080">67</tspan><tspan x="1532" fill="#30c040">S</tspan><tspan x="1558">5</tspan></text>
<text y="573"><tspan x="1398">14:54</tspan><tspan x="1446" fill="#f03c3c">11.29</tspan><tspan x="1516" fill="#e8e080">5</tspan><tspan x="1532" fill="#30c040">S</tspan><tspan x="1558">1</tspan></text>
<text y="589"><tspan x="1398">14:54</tspan><tspan x="1446" fill="#f03c3c">11.29</tspan><tspan x="1516" fill="#e8e080">1</tspan><tspan x="1532" fill="#30c040">S</tspan><tspan x="1558">1</tspan></text>
<text y="606"><tspan x="1398">14:54</tspan><tspan x="1446" fill="#f03c3c">11.29</tspan><tspan x="1508" fill="#e8e080">41</tspan><tspan x="1532" fill="#30c040">S</tspan><tspan x="1558">1</tspan></text>
<text y="622"><tspan x="1398">14:55</tspan><tspan x="1446" fill="#f03c3c">11.30</tspan><tspan x="1500" fill="#e8e080">105</tspan><tspan x="1532" fill="#f03c3c">B</tspan><tspan x="1558">8</tspan></text>
<text y="638"><tspan x="1398">14:55</tspan><tspan x="1446" fill="#f03c3c">11.31</tspan><tspan x="1500" fill="#e8e080">352</tspan><tspan x="1532" fill="#f03c3c">B</tspan><tspan x="1551">27</tspan></text>
<text y="654"><tspan x="1398">14:55</tspan><tspan x="1446" fill="#f03c3c">11.30</tspan><tspan x="1508" fill="#e8e080">11</tspan><tspan x="1532" fill="#30c040">S</tspan><tspan x="1558">2</tspan></text>
<text y="670"><tspan x="1398">14:55</tspan><tspan x="1446" fill="#f03c3c">11.27</tspan><tspan x="1500" fill="#e8e080">122</tspan><tspan x="1532" fill="#30c040">S</tspan><tspan x="1558">4</tspan></text>
<text y="687"><tspan x="1398">14:55</tspan><tspan x="1446" fill="#f03c3c">11.27</tspan><tspan x="1516" fill="#e8e080">2</tspan><tspan x="1532" fill="#f03c3c">B</tspan><tspan x="1558">1</tspan></text>
<text y="703"><tspan x="1398">14:55</tspan><tspan x="1446" fill="#f03c3c">11.27</tspan><tspan x="1516" fill="#e8e080">8</tspan><tspan x="1532" fill="#f03c3c">B</tspan><tspan x="1558">1</tspan></text>
<text y="719"><tspan x="1398">14:55</tspan><tspan x="1446" fill="#f03c3c">11.31</tspan><tspan x="1500" fill="#e8e080">149</tspan><tspan x="1532" fill="#f03c3c">B</tspan><tspan x="1553">11</tspan></text>
<text y="735"><tspan x="1398">14:55</tspan><tspan x="1446" fill="#f03c3c">11.28</tspan><tspan x="1508" fill="#e8e080">10</tspan><tspan x="1532" fill="#f03c3c">B</tspan><tspan x="1558">1</tspan></text>
<text y="751"><tspan x="1398">14:56</tspan><tspan x="1446" fill="#f03c3c">11.28</tspan><tspan x="1516" fill="#e8e080">2</tspan><tspan x="1532" fill="#f03c3c">B</tspan><tspan x="1558">1</tspan></text>
<text y="768"><tspan x="1398">14:56</tspan><tspan x="1446" fill="#f03c3c">11.30</tspan><tspan x="1508" fill="#e8e080">50</tspan><tspan x="1532" fill="#f03c3c">B</tspan><tspan x="1558">5</tspan></text>
<text y="784"><tspan x="1398">14:56</tspan><tspan x="1446" fill="#f03c3c">11.28</tspan><tspan x="1516" fill="#e8e080">2</tspan><tspan x="1532" fill="#30c040">S</tspan><tspan x="1558">1</tspan></text>
<text y="800"><tspan x="1398">14:56</tspan><tspan x="1446" fill="#f03c3c">11.30</tspan><tspan x="1508" fill="#e8e080">27</tspan><tspan x="1532" fill="#f03c3c">B</tspan><tspan x="1558">1</tspan></text>
<text y="816"><tspan x="1398">14:56</tspan><tspan x="1446" fill="#f03c3c">11.30</tspan><tspan x="1516" fill="#e8e080">5</tspan><tspan x="1532" fill="#30c040">S</tspan><tspan x="1558">2</tspan></text>
<text y="832"><tspan x="1398">14:56</tspan><tspan x="1446" fill="#f03c3c">11.30</tspan><tspan x="1508" fill="#e8e080">12</tspan><tspan x="1532" fill="#30c040">S</tspan><tspan x="1558">3</tspan></text>
<text y="849"><tspan x="1398">14:57</tspan><tspan x="1446" fill="#f03c3c">11.30</tspan><tspan x="1508" fill="#e8e080">49</tspan><tspan x="1532" fill="#f03c3c">B</tspan><tspan x="1558">1</tspan></text>
<text y="865"><tspan x="1398">14:57</tspan><tspan x="1446" fill="#f03c3c">11.30</tspan><tspan x="1500" fill="#e8e080">100</tspan><tspan x="1558">6</tspan></text>
<text y="881"><tspan x="1398">15:00</tspan><tspan x="1446" fill="#f03c3c">11.31</tspan><tspan x="1500" fill="#b040c0">571</tspan><tspan x="1551">61</tspan></text>
</g>
</svg>
</body></html>
